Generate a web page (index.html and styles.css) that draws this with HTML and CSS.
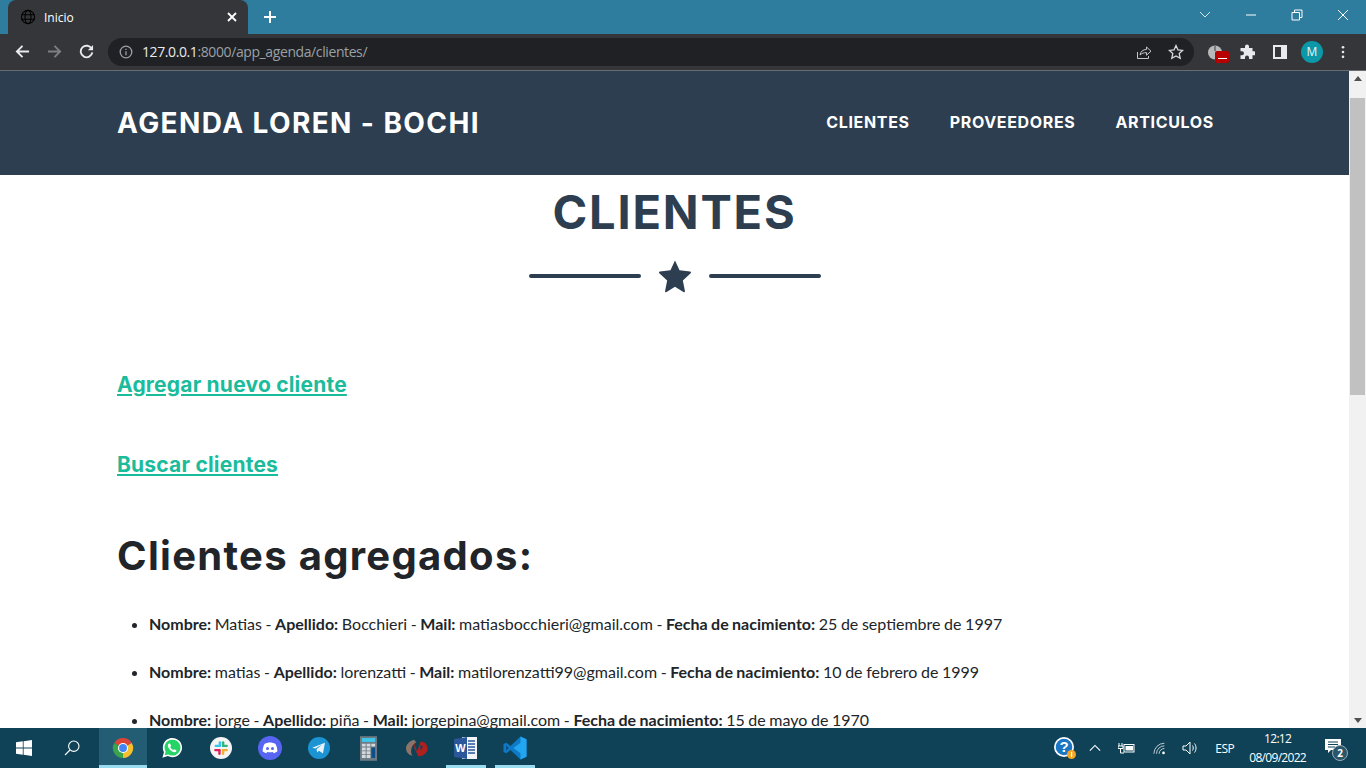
FILE: index.html
```html
<!DOCTYPE html>
<html>
<head>
    <title>Inicio</title>
    <link rel="stylesheet" href="styles.css">
</head>
<body>
    <div class="tabstrip">
        <div class="tab">
            <svg class="tab-globe" viewBox="0 0 16 16"><circle cx="8" cy="8" r="6.6"/><ellipse cx="8" cy="8" rx="3" ry="6.6"/><path d="M1.6 5.8h12.8M1.6 10.2h12.8"/></svg>
            <span class="tab-title">Inicio</span>
            <svg class="tab-close" viewBox="0 0 10 10"><path d="M1 1l8 8M9 1l-8 8"/></svg>
        </div>
        <svg class="new-tab" viewBox="0 0 12 12"><path d="M6 0v12M0 6h12"/></svg>
        <div class="window-controls">
            <svg class="win-btn win-chevron" viewBox="0 0 12 8"><path d="M1 1l5 5 5-5"/></svg>
            <svg class="win-btn win-min" viewBox="0 0 12 8"><path d="M1 4h10"/></svg>
            <svg class="win-btn win-restore" viewBox="0 0 12 12"><path d="M1 3.5h7.5V11H1zM3.5 3.5V1H11v7.5H8.5"/></svg>
            <svg class="win-btn win-x" viewBox="0 0 12 12"><path d="M1 1l10 10M11 1L1 11"/></svg>
        </div>
    </div>

    <div class="toolbar">
        <svg class="nav-icon" viewBox="0 0 16 16"><path d="M15 8H2M8 2L2 8l6 6"/></svg>
        <svg class="nav-icon nav-off" viewBox="0 0 16 16"><path d="M1 8h13M8 2l6 6-6 6"/></svg>
        <svg class="nav-icon" viewBox="0 0 16 16"><path d="M13.6 5.2A6.2 6.2 0 1 0 14.2 9"/><path class="fill" d="M15 1v5.6H9.4z"/></svg>
        <div class="omnibox">
            <svg class="info-icon" viewBox="0 0 14 14"><circle cx="7" cy="7" r="5.8"/><path d="M7 6.2v4M7 3.8v1.2"/></svg>
            <span class="url"><span class="url-host">127.0.0.1</span>:8000/app_agenda/clientes/</span>
            <svg class="omni-icon share-icon" viewBox="0 0 16 16"><path d="M1.5 8v6.5h11V12"/><path d="M4 11c.5-3.5 3-5.5 6.5-5.5V3l4.5 4.2-4.5 4V8.6C7.800 8.600 5.500 9.400 4 11z"/></svg>
            <svg class="omni-icon star-icon" viewBox="0 0 16 16"><path d="M8 1.500l2 4.400 4.700.5-3.500 3.200 1 4.700L8 11.900l-4.200 2.400 1-4.700L1.300 6.400 6 5.900z"/></svg>
        </div>
        <div class="ext-tomato">
            <svg viewBox="0 0 16 16"><circle cx="8" cy="8.500" r="7" fill="#b8b8b8"/><path d="M8 2v5" stroke="#666" stroke-width="1.500"/></svg>
            <span class="ext-badge"></span>
        </div>
        <svg class="tool-icon puzzle" viewBox="0 0 16 16"><path d="M6 2.500a2 2 0 0 1 4 0V4h3.500v3.300H15a2 2 0 0 1 0 4h-1.500V15H10v-1.500a2 2 0 0 0-4 0V15H1.500v-3.700H3a2 2 0 0 0 0-4H1.500V4H6z"/></svg>
        <svg class="tool-icon sidepanel" viewBox="0 0 14 14"><path fill-rule="evenodd" d="M0 0h14v14H0zM2 2v10h6V2z"/></svg>
        <span class="avatar">M</span>
        <svg class="tool-icon kebab" viewBox="0 0 4 16"><circle cx="2" cy="2.500" r="1.500"/><circle cx="2" cy="8" r="1.500"/><circle cx="2" cy="13.500" r="1.500"/></svg>
    </div>

    <div class="viewport">
        <div class="page">
            <nav class="navbar">
                <a class="brand">AGENDA LOREN - BOCHI</a>
                <ul class="nav-links">
                    <li>CLIENTES</li>
                    <li>PROVEEDORES</li>
                    <li>ARTICULOS</li>
                </ul>
            </nav>
            <header class="masthead">
                <h1>CLIENTES</h1>
                <div class="divider">
                    <span class="divider-line"></span>
                    <svg class="divider-star" viewBox="0 0 36 36"><path d="M18 1.500l4.800 10.300 11.200 1.400c.9.100 1.300 1.300.6 1.900l-8.300 7.700 2.200 11c.2.900-.8 1.600-1.600 1.200L18 29.500l-8.900 5.500c-.8.400-1.800-.3-1.600-1.200l2.200-11-8.300-7.700c-.7-.6-.3-1.800.6-1.900l11.200-1.400z"/></svg>
                    <span class="divider-line"></span>
                </div>
            </header>
            <main class="content">
                <h3 class="action"><a>Agregar nuevo cliente</a></h3>
                <h3 class="action"><a>Buscar clientes</a></h3>
                <h2 class="list-title">Clientes agregados:</h2>
                <ul class="client-list">
                    <li><b>Nombre:</b> Matias - <b>Apellido:</b> Bocchieri - <b>Mail:</b> matiasbocchieri@gmail.com - <b>Fecha de nacimiento:</b> 25 de septiembre de 1997</li>
                    <li><b>Nombre:</b> matias - <b>Apellido:</b> lorenzatti - <b>Mail:</b> matilorenzatti99@gmail.com - <b>Fecha de nacimiento:</b> 10 de febrero de 1999</li>
                    <li><b>Nombre:</b> jorge - <b>Apellido:</b> piña - <b>Mail:</b> jorgepina@gmail.com - <b>Fecha de nacimiento:</b> 15 de mayo de 1970</li>
                </ul>
            </main>
        </div>
        <div class="scrollbar">
            <span class="arrow-up"></span>
            <span class="scroll-thumb"></span>
            <span class="arrow-down"></span>
        </div>
    </div>

    <div class="taskbar">
        <div class="start"><svg viewBox="0 0 16 16"><path d="M0 2.300l6.800-1v6.300H0zM7.600 1.200L16 0v7.600H7.600zM0 8.400h6.800v6.300l-6.800-1zM7.600 8.400H16V16l-8.400-1.200z"/></svg></div>
        <div class="task-search"><svg viewBox="0 0 16 16"><circle cx="9.800" cy="6.200" r="5.200"/><path d="M6 10L1 15"/></svg></div>
        <div class="task task-active">
            <svg class="icon-chrome" viewBox="0 0 24 24"><path d="M12 12L2.470 6.500A11 11 0 0 1 21.530 6.500z" fill="#dc4437"/><path d="M12 12l9.530-5.500A11 11 0 0 1 12 23z" fill="#f6c02c"/><path d="M12 12v11A11 11 0 0 1 2.470 6.500z" fill="#3ba34a"/><circle cx="12" cy="12" r="5.500" fill="#fff"/><circle cx="12" cy="12" r="4.300" fill="#4285f4"/></svg>
        </div>
        <div class="task"><svg class="icon-22" viewBox="0 0 24 24"><path d="M1.500 22.500l1.700-6A10.500 10.500 0 1 1 7.500 20.800z" fill="#fff"/><path d="M4 20l1.100-3.900A8.700 8.700 0 1 1 8 19z" fill="#25d366"/><path d="M9 7c-.7 0-1.500 1-1.500 2.200 0 3 4 7.300 7.300 7.300 1.300 0 2.200-.9 2.200-1.800l-2.500-1.400-1 1c-1.400-.5-2.900-2-3.400-3.400l1-1L9.900 7z" fill="#fff"/></svg></div>
        <div class="task"><svg class="icon-22" viewBox="0 0 24 24"><circle cx="12" cy="12" r="12" fill="#f4f4f4"/><rect x="9.500" y="4.500" width="2.600" height="6.500" rx="1.300" fill="#36c5f0"/><rect x="5" y="8.500" width="7" height="2.500" rx="1.200" fill="#36c5f0"/><rect x="13" y="4.500" width="2.600" height="6.500" rx="1.300" fill="#2eb67d"/><rect x="13" y="8.500" width="6.500" height="2.500" rx="1.200" fill="#2eb67d"/><rect x="13" y="13" width="6.500" height="2.600" rx="1.300" fill="#ecb22e"/><rect x="13" y="13" width="2.600" height="6.500" rx="1.300" fill="#ecb22e"/><rect x="4.500" y="13" width="7" height="2.600" rx="1.300" fill="#e01e5a"/><rect x="9" y="13" width="2.600" height="6.500" rx="1.300" fill="#e01e5a"/></svg></div>
        <div class="task"><svg viewBox="0 0 24 24"><circle cx="12" cy="12" r="12" fill="#5865f2"/><path d="M6.500 8c3.300-2 7.700-2 11 0 1.300 2.400 2 5 1.800 7.500-1.200.9-2.400 1.500-3.600 1.800l-.9-1.400c-1.800.5-3.800.5-5.600 0l-.9 1.400c-1.200-.3-2.400-.9-3.600-1.800C4.500 13 5.200 10.400 6.500 8z" fill="#fff"/><circle cx="9.500" cy="12.500" r="1.500" fill="#5865f2"/><circle cx="14.500" cy="12.500" r="1.500" fill="#5865f2"/></svg></div>
        <div class="task"><svg class="icon-22" viewBox="0 0 24 24"><circle cx="12" cy="12" r="12" fill="#1c93d2"/><path d="M4.500 11.800l14-5.500-2.200 11.700-4.300-3-2 2-.7-3.700 6-5.200-7.200 4.500z" fill="#e6f3fa"/></svg></div>
        <div class="task"><svg class="icon-calc" viewBox="0 0 18 26"><rect width="18" height="26" fill="#6d7b85"/><rect x="2" y="2" width="14" height="4" fill="#3fc8ec"/><path d="M2 8h4v3H2zM7 8h4v3H7zM12 8h4v3h-4zM2 12h4v3H2zM7 12h4v3H7zM2 16h4v3H2zM7 16h4v3H7zM2 20h4v3H2zM7 20h4v3H7z" fill="#d4d9dc"/><rect x="12" y="12" width="4" height="11" fill="#0f4f88"/></svg></div>
        <div class="task"><svg class="icon-22" viewBox="0 0 24 24"><path d="M9 3C4 4 0 8 0 12.500S4 20 7 20.500C4.500 17 5 9 11 6z" fill="#8c7468"/><path d="M9 6l3 10 4-11c4 0 7.500 3 7.500 7.500S19 21 13.500 21L9 12z" fill="#b0201f"/><path d="M15.500 9l3 1-2.500 5z" fill="#0f4257"/></svg></div>
        <div class="task task-open">
            <svg viewBox="0 0 24 24"><rect x="8" y="1" width="15" height="22" fill="#f1f4f8"/><path d="M14 5h7M14 8h7M14 11h7M14 14h7M14 17h7" stroke="#2b579a" stroke-width="1.300"/><path d="M0 3l13-2v22L0 21z" fill="#2b579a"/><text x="6.500" y="16" class="word-w">W</text></svg>
        </div>
        <div class="task task-open">
            <svg viewBox="0 0 24 24"><path d="M17.500 0.500L23.500 3.300v17.400l-6 2.800-10-9.500-4.300 3.300L0.500 16V8l2.700-1.300L7.500 10z" fill="#0e7ac7"/><path d="M17.500 0.500L23.500 3.300v17.400l-6 2.800V0.500zM17.500 6.800L10.400 12l7.100 5.300z" fill="#23a6f0"/><path d="M3.200 9.300L5.800 12l-2.600 2.700z" fill="#0e4f80"/></svg>
        </div>
        <div class="tray">
            <svg class="tray-help" viewBox="0 0 24 24"><circle cx="11" cy="11" r="10" fill="#fff"/><circle cx="11" cy="11" r="8.300" fill="#1a76c2"/><text x="11" y="16" class="help-mark">?</text><circle cx="18.500" cy="18.500" r="4.500" fill="#f5a623"/><rect x="18" y="16" width="1.200" height="5" fill="#fff"/></svg>
            <svg class="tray-icon tray-caret" viewBox="0 0 14 8"><path d="M1 7l6-6 6 6"/></svg>
            <svg class="tray-icon tray-battery" viewBox="0 0 17 12"><path d="M1 1v3M4 1v3M0 4h5v2.500H0zM2.500 6.500V11H6"/><rect x="6" y="2.500" width="10" height="7.500"/><rect class="tray-fill" x="7.500" y="4" width="7.500" height="4.500"/></svg>
            <svg class="tray-icon tray-wifi" viewBox="0 0 16 14"><path d="M1 13A12 12 0 0 1 13 1M4 13a9 9 0 0 1 9-9M7 13a6 6 0 0 1 6-6"/><circle class="tray-dot" cx="12" cy="12" r="1.500"/></svg>
            <svg class="tray-icon tray-sound" viewBox="0 0 16 14"><path d="M1 5h3l4-4v12l-4-4H1zM10.500 4.500c1 1.500 1 3.500 0 5M12.500 2.500c2 2.500 2 6.500 0 9"/></svg>
            <span class="tray-lang">ESP</span>
            <div class="clock"><span>12:12</span><span>08/09/2022</span></div>
            <div class="notif">
                <svg viewBox="0 0 16 16"><path d="M0 0h16v11H6l-3 3v-3H0z"/><path class="notif-lines" d="M3 3h10M3 5.500h10M3 8h7"/></svg>
                <span class="notif-count">2</span>
            </div>
        </div>
    </div>
</body>
</html>
```

FILE: styles.css
```css
* { box-sizing: border-box; }
html, body { height: 100%; }
body { margin: 0; display: flex; flex-direction: column; height: 768px; overflow: hidden; font-family: "Lato", sans-serif; background: #fff; }
svg { display: block; }

/* tab strip */
.tabstrip { height: 34px; flex: none; background: #2e7d9f; display: flex; align-items: flex-end; padding-left: 8px; }
.tab { width: 240px; height: 34px; background: #35363a; border-radius: 8px 8px 0 0; display: flex; align-items: center; padding: 0 0 0 12px; }
.tab-globe { width: 16px; height: 16px; fill: none; stroke: #000; stroke-width: 1.100; }
.tab-title { margin-left: 8px; flex: 1; color: #fff; font: 12px "Open Sans", sans-serif; }
.tab-close { width: 10px; height: 10px; margin-right: 11px; fill: none; stroke: #fff; stroke-width: 1.800; }
.new-tab { width: 12px; height: 12px; margin-left: 16px; align-self: center; fill: none; stroke: #fff; stroke-width: 2; }
.window-controls { margin-left: auto; height: 30px; align-self: flex-start; display: flex; align-items: center; }
.win-btn { fill: none; stroke: #fff; stroke-width: 1; }
.win-chevron { width: 12px; height: 8px; margin-right: 34px; stroke: #d9e8ef; }
.win-min { width: 12px; height: 8px; margin-right: 34px; }
.win-restore { width: 12px; height: 12px; margin-right: 34px; }
.win-x { width: 12px; height: 12px; margin-right: 17px; }

/* toolbar */
.toolbar { height: 37px; flex: none; background: #35363a; border-bottom: 1px solid #6a6b6e; display: flex; align-items: center; padding: 0 0 1px 15px; }
.nav-icon { width: 15px; height: 15px; margin-right: 17px; fill: none; stroke: #e8eaed; stroke-width: 2; }
.nav-icon .fill { fill: #e8eaed; stroke: none; }
.nav-off { stroke: #7d7f82; }
.omnibox { width: 1086px; height: 28px; margin-left: -3px; background: #202124; border-radius: 14px; display: flex; align-items: center; padding: 0 10px 0 11px; }
.info-icon { width: 14px; height: 14px; fill: none; stroke: #9aa0a6; stroke-width: 1.300; }
.url { margin-left: 9px; flex: 1; color: #9aa0a6; font: 14px "Open Sans", sans-serif; letter-spacing: -0.4px; }
.url-host { color: #e8eaed; }
.omni-icon { width: 16px; height: 16px; fill: none; stroke: #c4c7c9; stroke-width: 1; }
.share-icon { margin-right: 16px; }
.star-icon { stroke-width: 1.300; stroke: #dadce0; }
.ext-tomato { position: relative; width: 16px; height: 16px; margin-left: 13px; }
.ext-badge { position: absolute; left: 8px; top: 7px; width: 14px; height: 12px; background: #b80000; border-radius: 2px; }
.ext-badge::after { content: ""; position: absolute; left: 3px; right: 2px; top: 7px; height: 1px; background: #fff; }
.tool-icon { fill: #e8eaed; }
.puzzle { width: 16px; height: 16px; margin-left: 16px; }
.sidepanel { width: 14px; height: 14px; margin-left: 18px; }
.avatar { width: 22px; height: 22px; margin-left: 14px; border-radius: 50%; background: #0b98a8; color: #e8f6f7; font: 12px/22px "Open Sans", sans-serif; text-align: center; }
.kebab { width: 4px; height: 14px; margin-left: 18px; fill: #e8eaed; }

/* page */
.viewport { flex: 1; min-height: 0; display: flex; }
.page { flex: 1; min-width: 0; overflow: hidden; }
.navbar { height: 104px; background: #2c3e50; display: flex; align-items: center; justify-content: space-between; padding: 0 135px 0 117px; color: #fff; font-family: "Inter", sans-serif; font-weight: 700; }
.brand { font-size: 28px; letter-spacing: 1.4px; }
.nav-links { list-style: none; margin: 0; padding: 0 0 2px; display: flex; gap: 40px; font-size: 16px; letter-spacing: 0.66px; }
.masthead { height: 176px; display: flex; flex-direction: column; align-items: center; padding-top: 9px; color: #2c3e50; }
.masthead h1 { margin: 0; font: 700 47px/56px "Inter", sans-serif; letter-spacing: 1.8px; }
.divider { margin-top: 19px; display: flex; align-items: center; gap: 17px; }
.divider-line { width: 112px; height: 4px; border-radius: 2px; background: #2c3e50; }
.divider-star { width: 34px; height: 34px; fill: #2c3e50; }
.content { padding: 0 117px; color: #212529; }
.action { margin: 0; height: 80px; padding-top: 20px; font: 700 21px/28px "Inter", sans-serif; letter-spacing: 0.2px; color: #1abc9c; }
.action a { text-decoration: underline; }
.list-title { margin: 0; height: 101px; padding-top: 21px; font: 700 40px/48px "Inter", sans-serif; letter-spacing: 1.3px; }
.client-list { margin: 0; padding: 0 0 0 32px; font-size: 16px; line-height: 24px; word-spacing: -0.5px; }
.client-list li { margin-bottom: 24px; }
.scrollbar { width: 17px; flex: none; background: #f1f1f1; display: flex; flex-direction: column; align-items: center; }
.arrow-up { margin-top: 5px; width: 0; height: 0; border: 4px solid transparent; border-top: 0; border-bottom: 5px solid #505050; }
.scroll-thumb { margin-top: 17px; width: 15px; height: 297px; background: #c1c1c1; }
.arrow-down { margin-top: auto; margin-bottom: 5px; width: 0; height: 0; border: 4px solid transparent; border-bottom: 0; border-top: 5px solid #505050; }

/* taskbar */
.taskbar { height: 40px; flex: none; background: #0f4257; display: flex; align-items: center; color: #fff; }
.start { width: 48px; height: 40px; display: flex; align-items: center; justify-content: center; }
.start svg { width: 16px; height: 16px; fill: #fff; }
.task-search { width: 51px; height: 40px; padding-right: 3px; display: flex; align-items: center; justify-content: center; }
.task-search svg { width: 16px; height: 16px; fill: none; stroke: #fff; stroke-width: 1.100; }
.task { width: 48px; height: 40px; display: flex; align-items: center; justify-content: center; flex: none; margin-right: 1px; }
.task svg { width: 24px; height: 24px; }
.task .icon-chrome { width: 22px; height: 22px; }
.task .icon-22 { width: 22px; height: 22px; }
.task .icon-calc { width: 17px; height: 25px; }
.task-active { background: #235d74 linear-gradient(#99dcef, #99dcef) center bottom / 48px 3px no-repeat; }
.task-open { background: linear-gradient(#99dcef, #99dcef) center bottom / 40px 3px no-repeat; }
.word-w { font: 700 11px "Liberation Sans", sans-serif; fill: #fff; text-anchor: middle; }
.help-mark { font: 700 15px "Liberation Sans", sans-serif; fill: #fff; text-anchor: middle; }
.tray { margin-left: auto; height: 40px; display: flex; align-items: center; }
.tray-help { width: 24px; height: 24px; margin-right: 12px; }
.tray-icon { fill: none; stroke: #fff; stroke-width: 1; }
.tray-caret { width: 12px; height: 8px; margin-right: 17px; stroke-width: 1.300; }
.tray-battery { width: 17px; height: 12px; margin-right: 18px; }
.tray-fill { fill: #fff; stroke: none; }
.tray-wifi { width: 14px; height: 13px; margin-right: 15px; stroke: #d5dde1; }
.tray-dot { fill: #fff; stroke: none; }
.tray-sound { width: 16px; height: 14px; margin-right: 17px; }
.tray-lang { font: 12px "Open Sans", sans-serif; letter-spacing: -0.5px; margin-right: 15px; }
.clock { display: flex; flex-direction: column; align-items: center; font: 12px/19px "Open Sans", sans-serif; letter-spacing: -0.7px; margin-right: 19px; }
.notif { position: relative; width: 18px; height: 18px; margin-right: 23px; }
.notif svg { width: 16px; height: 16px; fill: #fff; }
.notif-lines { stroke: #0f4257; fill: none; stroke-width: 1; }
.notif-count { position: absolute; left: 7px; top: 6px; width: 16px; height: 16px; border-radius: 50%; border: 1px solid #9ab; background: #2b566a; font: 700 10px/14px "Open Sans", sans-serif; text-align: center; }
```
